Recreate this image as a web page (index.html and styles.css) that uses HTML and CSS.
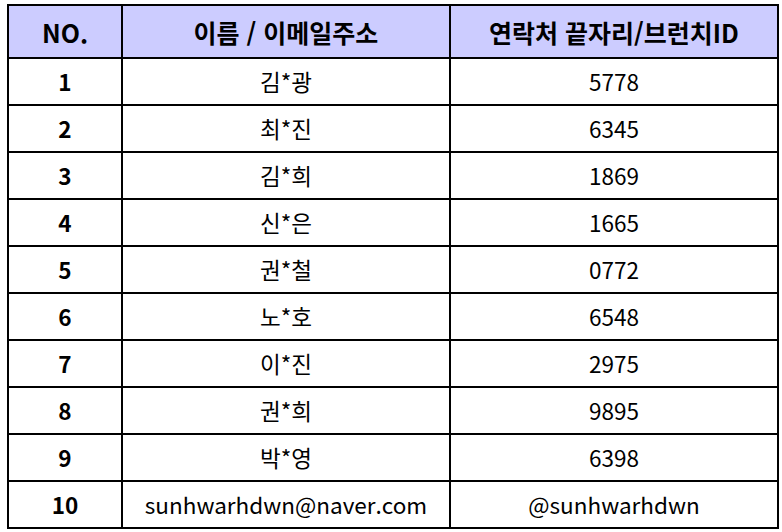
FILE: index.html
```html
<!DOCTYPE html>
<html lang="ko">
<head>
<meta charset="utf-8">
<link rel="stylesheet" href="styles.css">
</head>
<body>
<table class="list">
  <colgroup>
    <col class="c-no">
    <col class="c-name">
    <col class="c-id">
  </colgroup>
  <thead>
    <tr><th>NO.</th><th>이름 / 이메일주소</th><th>연락처 끝자리/브런치ID</th></tr>
  </thead>
  <tbody>
    <tr><td class="no">1</td><td>김*광</td><td>5778</td></tr>
    <tr><td class="no">2</td><td>최*진</td><td>6345</td></tr>
    <tr><td class="no">3</td><td>김*희</td><td>1869</td></tr>
    <tr><td class="no">4</td><td>신*은</td><td>1665</td></tr>
    <tr><td class="no">5</td><td>권*철</td><td>0772</td></tr>
    <tr><td class="no">6</td><td>노*호</td><td>6548</td></tr>
    <tr><td class="no">7</td><td>이*진</td><td>2975</td></tr>
    <tr><td class="no">8</td><td>권*희</td><td>9895</td></tr>
    <tr><td class="no">9</td><td>박*영</td><td>6398</td></tr>
    <tr><td class="no">10</td><td>sunhwarhdwn@naver.com</td><td>@sunhwarhdwn</td></tr>
  </tbody>
</table>
</body>
</html>
```

FILE: styles.css
```css
html, body {
  margin: 0;
  padding: 0;
  background: #ffffff;
}
body {
  padding: 4px 0 0 7px;
  font-family: "Noto Sans CJK KR", "Noto Sans", sans-serif;
  color: #000;
}
.list {
  border-collapse: collapse;
  width: 770px;
  table-layout: fixed;
}
.c-no { width: 114px; }
.c-name { width: 328px; }
.c-id { width: 328px; }
.list th, .list td {
  border: 2px solid #000;
  text-align: center;
  vertical-align: middle;
  padding: 0;
  line-height: 1.2;
}
.list th {
  background: #ccccff;
  height: 51px;
  font-size: 25px;
  font-weight: 700;
}
.list td {
  height: 45px;
  font-size: 22.5px;
  font-weight: 400;
}
.list td.no {
  font-weight: 700;
}
```
